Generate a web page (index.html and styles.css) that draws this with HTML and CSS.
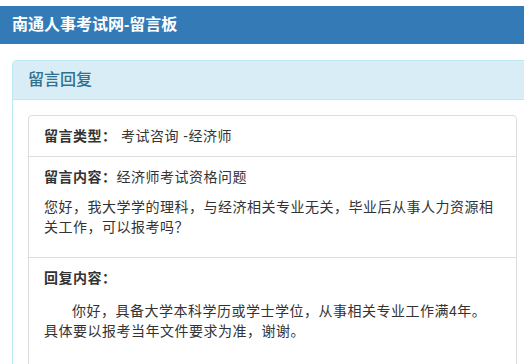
FILE: index.html
```html
<!DOCTYPE html>
<html lang="zh-CN">
<head>
    <meta charset="UTF-8">
    <meta name="viewport" content="width=device-width, initial-scale=1.0">
    <title>南通人事考试网-留言板</title>
    <link rel="stylesheet" href="styles.css">
</head>
<body>
    <header class="topbar">
        <h1>南通人事考试网-留言板</h1>
    </header>
    <main class="panel">
        <div class="panel-heading">
            <h3>留言回复</h3>
        </div>
        <div class="panel-body">
            <ul class="list-group">
                <li class="list-item">
                    <b>留言类型：</b> 考试咨询 -经济师
                </li>
                <li class="list-item">
                    <p><b>留言内容：</b>经济师考试资格问题</p>
                    <p>您好，我大学学的理科，与经济相关专业无关，毕业后从事人力资源相关工作，可以报考吗？</p>
                </li>
                <li class="list-item">
                    <p class="reply-label"><b>回复内容：</b></p>
                    <p class="reply">你好，具备大学本科学历或学士学位，从事相关专业工作满4年。<br>具体要以报考当年文件要求为准，谢谢。</p>
                </li>
            </ul>
        </div>
    </main>
</body>
</html>
```

FILE: styles.css
```css
html, body {
    overflow: hidden;
}

body {
    margin: 0;
    padding-top: 6px;
    font-family: "Liberation Sans", "Noto Sans CJK SC", sans-serif;
    font-size: 14px;
    line-height: 20px;
    color: #333;
    background: #fff;
}

.topbar {
    background-color: #337ab7;
    height: 38px;
    padding: 0 12px;
}

.topbar h1 {
    margin: 0;
    font-size: 16px;
    line-height: 38px;
    font-weight: bold;
    color: #fff;
}

.panel {
    display: block;
    box-sizing: border-box;
    width: 521px;
    margin: 16px 0 0 12px;
    border: 1px solid #bce8f1;
    border-radius: 4px;
}

.panel-heading {
    background-color: #d9edf7;
    color: #31708f;
    padding: 10px 15px;
    border-bottom: 1px solid #bce8f1;
    border-radius: 3px 3px 0 0;
}

.panel-heading h3 {
    margin: 0;
    font-size: 16px;
    line-height: 1.1;
    font-weight: 500;
}

.panel-body {
    padding: 15px;
}

.list-group {
    list-style: none;
    margin: 0;
    padding: 0;
    border: 1px solid #ddd;
    border-radius: 4px;
}

.list-item {
    padding: 10px 15px;
    letter-spacing: 0.5px;
}

.list-item + .list-item {
    border-top: 1px solid #ddd;
}

.list-item p {
    margin: 0 0 10px;
}

.list-item .reply-label {
    margin-bottom: 13px;
}

.reply {
    text-indent: 2em;
}

.list-item .reply {
    margin-bottom: 40px;
}
```
